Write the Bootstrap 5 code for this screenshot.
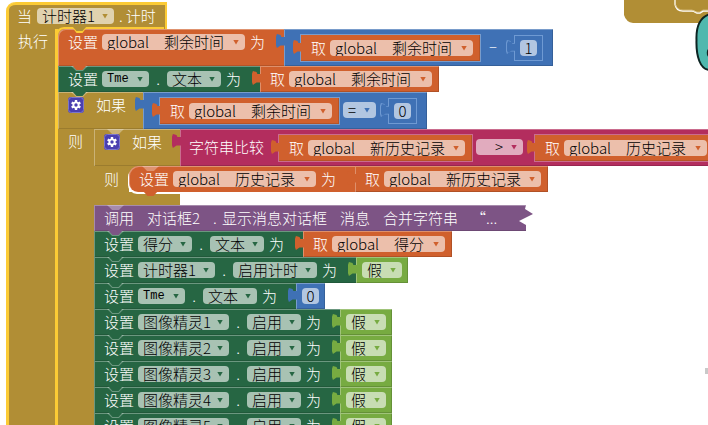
<!DOCTYPE html>
<html lang="zh-CN">
<head>
<meta charset="utf-8">
<meta name="viewport" content="width=device-width, initial-scale=1">
<title>计时器1.计时</title>
<link href="https://cdn.jsdelivr.net/npm/bootstrap@5.3.0/dist/css/bootstrap.min.css" rel="stylesheet">
<style>
:root{--gold:#b18e35;--orange:#d0602d;--green:#266643;--blue:#3f71b5;--pink:#b32d5e;--purple:#7d5485;--lime:#77ab41;--glow:#fccb35}
body{font-family:"Noto Sans CJK SC",sans-serif;font-weight:300;font-size:15px;line-height:16px;color:#fff;background:#fff}
.canvas{height:100vh}
.gold{--c:var(--gold)}.orange{--c:var(--orange)}.green{--c:var(--green)}.blue{--c:var(--blue)}
.pink{--c:var(--pink)}.purple{--c:var(--purple)}.lime{--c:var(--lime)}

/* event block */
.event{left:6px;top:2px;border-left:3px solid var(--glow);border-top-left-radius:9px;min-height:100vh}
.event-head{background:var(--gold);border-top:3px solid var(--glow);border-right:2px solid var(--glow);border-top-left-radius:7px;height:27px;width:158px;padding:3px 0 0 8px;gap:5px}
.event-side{background:var(--gold);width:46px;padding:4px 0 0 9px}
.event-stack{border-left:3px solid var(--glow);background:linear-gradient(var(--gold),var(--gold)) no-repeat 0 0/10px 10px}
.event-stack>.stmt:first-child .head{border-top-left-radius:7px}
.rim{left:-3px;top:-2px;width:109px;height:12px;border:solid var(--glow);border-width:2px 0 0 3px;border-radius:9px 0 0 0;z-index:3}
.rim::after{content:"";position:absolute;left:14px;top:-2px;width:15px;height:6px;background:var(--glow);clip-path:polygon(0 0,100% 0,70% 100%,30% 100%)}
.rim::before{content:"";position:absolute;left:14px;top:-3px;width:15px;height:5px;background:var(--gold);clip-path:polygon(0 0,100% 0,70% 100%,30% 100%);z-index:1}

/* statements */
.stmt{position:relative;height:26px}
.stmt.tall{height:37px}
.stmt::before{content:"";position:absolute;z-index:1;left:13px;top:0;width:17px;height:5px;background:rgba(255,255,255,.32);clip-path:polygon(0 0,100% 0,70% 100%,30% 100%)}
.stmt::after{content:"";position:absolute;z-index:2;left:14px;top:calc(100% - 1px);width:15px;height:5px;background:var(--c);clip-path:polygon(0 0,100% 0,70% 100%,30% 100%)}
.stmt.open::after,.event-stack>.stmt:first-child::before{display:none}
.head{background:var(--c);padding:5px 0 0 10px;box-shadow:inset 1px 1px rgba(255,255,255,.32),inset 0 -1px rgba(0,0,0,.12)}
.verb{margin-right:4px}
.dot{width:18px;text-align:center}
.to{width:39px;padding-left:5px}
.cond{width:85px;gap:12px}
.cond.inner{width:86px}
.side{background:var(--gold);width:36px;padding:4px 0 0 10px}
.side.inner{width:35px;padding-top:5px}
.foot{background:var(--gold);width:86px;height:13px}
.nest{background:linear-gradient(var(--gold),var(--gold)) no-repeat 0 0/10px 14px}
.nest>.stmt .head{border-radius:9px 0 0 9px;box-shadow:inset 1px 1px rgba(255,255,255,.32),-1px 2px #fff}
.call{width:439px;gap:13px;clip-path:polygon(0 0,calc(100% - 7px) 0,calc(100% - 8px) 4px,100% 9px,calc(100% - 14px) 16px,calc(100% - 7px) 20px,calc(100% - 7px) 100%,0 100%)}
.call .tick{width:9px;margin-right:-13px}

/* value blocks */
.val{position:relative;background:var(--c);padding:5px 7px 0 10px;box-shadow:inset 1px 1px rgba(255,255,255,.3),inset -1px -1px rgba(0,0,0,.15)}
.val::before{content:"";position:absolute;z-index:2;left:-8px;top:5px;width:9px;height:14px;background:var(--c);clip-path:polygon(100% 22%,60% 22%,50% 8%,10% 0,0 20%,0 80%,10% 100%,50% 82%,100% 82%)}
.val .get{margin-right:4px}
.val.solo{padding:5px 6px 0}
.val.math{padding:0 10px 0 17px}
.val.text{padding:0 10px 0 9px}
.inset{height:26px;margin-top:6px;box-shadow:0 0 0 1px rgba(255,255,255,.3),inset -1px -1px rgba(0,0,0,.12)}
.inset.blue{box-shadow:inset 0 0 0 1px #6f9ad3}
.inset.blue::before{background:#6f9ad3}
.inset.blue::after{content:"";position:absolute;z-index:2;left:-7px;top:6px;width:9px;height:12px;background:var(--c);clip-path:polygon(100% 22%,60% 22%,50% 8%,10% 0,0 20%,0 80%,10% 100%,50% 82%,100% 82%)}
.oper{margin:10px 12px 0 4px}
.minus{width:34px;padding:9px 0 0 9px}
.compare{margin:10px 15px 0 0}

/* fields */
.pick select,.num{appearance:none;border:0;border-radius:4px;background:rgba(255,255,255,.6);color:#000;font-weight:300;height:16px;line-height:16px;padding:0 0 0 5px;width:100%}
.pick{height:16px}
.pick::after{content:"";flex:none;align-self:center;width:6px;height:5px;margin:0 6px 0 -12px;background:var(--c);clip-path:polygon(0 0,100% 0,50% 100%);pointer-events:none}
.num{width:17px;padding:0;text-align:center}
.w1{width:40px}.w2{width:54px}.w3{width:77px}.w4{width:84px}.w5{width:91px}
.g2{width:113px}.g4{width:143px}.g5{width:157px}.wt{width:47px}.we{width:33px}
.wt select{font-family:"Liberation Mono",monospace;font-weight:400;font-size:12px}
.wt.gt select{font-family:"Noto Sans CJK SC",sans-serif;font-weight:300;font-size:15px;padding-left:19px}
.gear{width:16px;height:16px;line-height:0}

/* neighbouring canvas items */
.other{right:0;top:0;width:84px;height:72px}
.speck{right:0;top:368px;width:3px;height:6px;background:#c9c9c9}
</style>
</head>
<body>
<svg class="d-none" aria-hidden="true"><symbol id="gear" viewBox="0 0 16 16"><rect width="16" height="16" rx="3" fill="#4a3fb0"/><rect x=".5" y=".5" width="15" height="15" rx="3" fill="none" stroke="#7b76cb"/><g stroke="#fff" stroke-width="2.4"><path d="M8 3v10M3.700 5.500l8.600 5M3.700 10.500l8.600-5"/></g><circle cx="8" cy="8" r="3.500" fill="#fff"/><circle cx="8" cy="8" r="1.700" fill="#4a3fb0"/></symbol></svg>
<main class="canvas position-relative overflow-hidden">
<section class="event gold position-absolute d-flex flex-column">
  <div class="event-head d-flex flex-shrink-0"><span>当</span><span class="pick w3 d-flex"><select aria-label="组件"><option>计时器1</option></select></span><span>.&#8201;计时</span></div>
  <div class="d-flex flex-grow-1">
    <div class="event-side flex-shrink-0">执行</div>
    <div class="event-stack position-relative d-flex flex-column align-items-start">
      <div class="stmt tall orange d-flex"><div class="head d-flex"><span class="verb">设置</span><span class="pick g4 d-flex"><select aria-label="变量"><option>global　剩余时间</option></select></span><span class="to">为</span></div>
        <div class="val math blue d-flex">
          <div class="val inset orange d-flex"><span class="get">取</span><span class="pick g4 d-flex"><select aria-label="变量"><option>global　剩余时间</option></select></span></div>
          <span class="minus">–</span>
          <div class="val inset solo blue"><input class="num d-block" aria-label="数字" value="1"></div>
        </div></div>
      <div class="stmt green d-flex"><div class="head d-flex"><span class="verb">设置</span><span class="pick wt d-flex"><select aria-label="组件"><option>Tme</option></select></span><span class="dot">.</span><span class="pick w2 d-flex"><select aria-label="属性"><option>文本</option></select></span><span class="to">为</span></div>
        <div class="val orange d-flex"><span class="get">取</span><span class="pick g4 d-flex"><select aria-label="变量"><option>global　剩余时间</option></select></span></div></div>
      <div class="stmt tall open gold d-flex"><div class="head cond d-flex"><button class="gear border-0 bg-transparent p-0" aria-label="设置条件"><svg width="16" height="16"><use href="#gear"/></svg></button><span>如果</span></div>
        <div class="val math blue d-flex">
          <div class="val inset orange d-flex"><span class="get">取</span><span class="pick g4 d-flex"><select aria-label="变量"><option>global　剩余时间</option></select></span></div>
          <span class="pick we oper d-flex"><select aria-label="运算符"><option>=</option></select></span>
          <div class="val inset solo blue"><input class="num d-block" aria-label="数字" value="0"></div>
        </div></div>
      <div class="d-flex flex-grow-1">
        <div class="side flex-shrink-0">则</div>
        <div class="d-flex flex-column align-items-start">
          <div class="stmt tall open gold d-flex"><div class="head cond inner d-flex"><button class="gear border-0 bg-transparent p-0" aria-label="设置条件"><svg width="16" height="16"><use href="#gear"/></svg></button><span>如果</span></div>
            <div class="val text pink d-flex"><span class="compare text-nowrap">字符串比较</span>
              <div class="val inset orange d-flex"><span class="get">取</span><span class="pick g5 d-flex"><select aria-label="变量"><option>global　新历史记录</option></select></span></div>
              <span class="pick wt gt oper d-flex"><select aria-label="运算符"><option>&gt;</option></select></span>
              <div class="val inset orange d-flex"><span class="get">取</span><span class="pick g4 d-flex"><select aria-label="变量"><option>global　历史记录</option></select></span></div>
            </div></div>
          <div class="d-flex"><div class="side inner flex-shrink-0">则</div>
            <div class="nest"><div class="stmt orange d-flex"><div class="head d-flex"><span class="verb">设置</span><span class="pick g4 d-flex"><select aria-label="变量"><option>global　历史记录</option></select></span><span class="to">为</span></div>
              <div class="val orange d-flex"><span class="get">取</span><span class="pick g5 d-flex"><select aria-label="变量"><option>global　新历史记录</option></select></span></div></div></div></div>
          <div class="foot"></div>
          <div class="stmt purple d-flex"><div class="head call d-flex text-nowrap"><span>调用</span><span>对话框2</span><span class="tick">.</span><span>显示消息对话框</span><span>消息</span><span>合并字符串</span><span>“...</span></div></div>
          <div class="stmt green d-flex"><div class="head d-flex"><span class="verb">设置</span><span class="pick w2 d-flex"><select aria-label="组件"><option>得分</option></select></span><span class="dot">.</span><span class="pick w2 d-flex"><select aria-label="属性"><option>文本</option></select></span><span class="to">为</span></div>
            <div class="val orange d-flex"><span class="get">取</span><span class="pick g2 d-flex"><select aria-label="变量"><option>global　得分</option></select></span></div></div>
          <div class="stmt green d-flex"><div class="head d-flex"><span class="verb">设置</span><span class="pick w3 d-flex"><select aria-label="组件"><option>计时器1</option></select></span><span class="dot">.</span><span class="pick w4 d-flex"><select aria-label="属性"><option>启用计时</option></select></span><span class="to">为</span></div>
            <div class="val solo lime"><span class="pick w1 d-flex"><select aria-label="逻辑值"><option>假</option></select></span></div></div>
          <div class="stmt green d-flex"><div class="head d-flex"><span class="verb">设置</span><span class="pick wt d-flex"><select aria-label="组件"><option>Tme</option></select></span><span class="dot">.</span><span class="pick w2 d-flex"><select aria-label="属性"><option>文本</option></select></span><span class="to">为</span></div>
            <div class="val solo blue"><input class="num d-block" aria-label="数字" value="0"></div></div>
          <div class="stmt green d-flex"><div class="head d-flex"><span class="verb">设置</span><span class="pick w5 d-flex"><select aria-label="组件"><option>图像精灵1</option></select></span><span class="dot">.</span><span class="pick w2 d-flex"><select aria-label="属性"><option>启用</option></select></span><span class="to">为</span></div>
            <div class="val solo lime"><span class="pick w1 d-flex"><select aria-label="逻辑值"><option>假</option></select></span></div></div>
          <div class="stmt green d-flex"><div class="head d-flex"><span class="verb">设置</span><span class="pick w5 d-flex"><select aria-label="组件"><option>图像精灵2</option></select></span><span class="dot">.</span><span class="pick w2 d-flex"><select aria-label="属性"><option>启用</option></select></span><span class="to">为</span></div>
            <div class="val solo lime"><span class="pick w1 d-flex"><select aria-label="逻辑值"><option>假</option></select></span></div></div>
          <div class="stmt green d-flex"><div class="head d-flex"><span class="verb">设置</span><span class="pick w5 d-flex"><select aria-label="组件"><option>图像精灵3</option></select></span><span class="dot">.</span><span class="pick w2 d-flex"><select aria-label="属性"><option>启用</option></select></span><span class="to">为</span></div>
            <div class="val solo lime"><span class="pick w1 d-flex"><select aria-label="逻辑值"><option>假</option></select></span></div></div>
          <div class="stmt green d-flex"><div class="head d-flex"><span class="verb">设置</span><span class="pick w5 d-flex"><select aria-label="组件"><option>图像精灵4</option></select></span><span class="dot">.</span><span class="pick w2 d-flex"><select aria-label="属性"><option>启用</option></select></span><span class="to">为</span></div>
            <div class="val solo lime"><span class="pick w1 d-flex"><select aria-label="逻辑值"><option>假</option></select></span></div></div>
          <div class="stmt green d-flex"><div class="head d-flex"><span class="verb">设置</span><span class="pick w5 d-flex"><select aria-label="组件"><option>图像精灵5</option></select></span><span class="dot">.</span><span class="pick w2 d-flex"><select aria-label="属性"><option>启用</option></select></span><span class="to">为</span></div>
            <div class="val solo lime"><span class="pick w1 d-flex"><select aria-label="逻辑值"><option>假</option></select></span></div></div>
        </div>
      </div>
      <div class="rim position-absolute"></div>
    </div>
  </div>
</section>
<svg class="other position-absolute" viewBox="0 0 84 72" aria-hidden="true">
  <path d="M0 0h84v23H9Q2 22 0 15z" fill="#b18e35"/>
  <path d="M51 0v4q1 7 8 7h9q2 0 3 1l2 1h3l3-2h6" fill="none" stroke="#fff" stroke-width="1.6"/>
  <path d="M51 0v4q2 6 8 6h9l4 2h4l3-2h5" fill="none" stroke="#d6bd7c" stroke-width=".8"/>
  <path d="M86 14C76 17 72 27 72.500 40C72 56 76 70 86 70z" fill="#4fb8ae" stroke="#0c2422" stroke-width="2"/>
  <path d="M86 48q-4 1-3 7l3 5z" fill="#0c2422"/>
</svg>
<div class="speck position-absolute"></div>
</main>
<script src="https://cdn.jsdelivr.net/npm/bootstrap@5.3.0/dist/js/bootstrap.bundle.min.js"></script>
</body>
</html>
